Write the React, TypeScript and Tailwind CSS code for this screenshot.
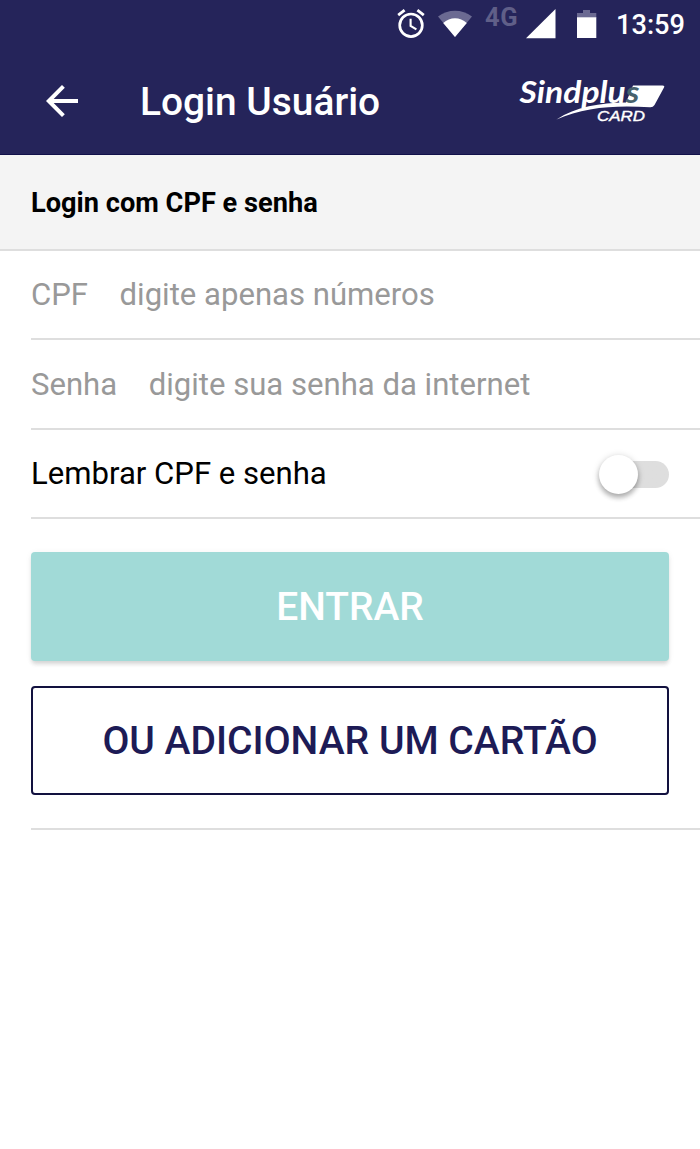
import { useState } from 'react';

function AlarmIcon() {
  return (
    <svg width="28" height="30" viewBox="0 0 28 30" fill="none" stroke="white" className="shrink-0">
      <circle cx="14" cy="16.3" r="11.3" strokeWidth="2.7" />
      <path d="M13.6 9.8v7.2l5.8 3.4" strokeWidth="2.1" />
      <path d="M1.2 6.2 7.6 1.2M26.8 6.2 20.4 1.2" strokeWidth="2.8" />
    </svg>
  );
}

function WifiIcon() {
  return (
    <svg width="34" height="28" viewBox="0 0 34 28" className="shrink-0">
      <path d="M0 6.5C10-1.2 24-1.2 34 6.5L17 27z" fill="#6b6a92" />
      <path d="M5.2 13C12 6.5 22 6.5 28.8 13L17 27z" fill="white" />
    </svg>
  );
}

function SignalIcon() {
  return (
    <svg width="30" height="30" viewBox="0 0 30 30" className="shrink-0">
      <path d="M29.5 0v29.3H0z" fill="white" />
    </svg>
  );
}

function BatteryIcon() {
  return (
    <svg width="20" height="28" viewBox="0 0 20 28" className="shrink-0">
      <path d="M6 0h7v3h6.3v5H0V3h6z" fill="#6b6a92" />
      <path d="M0 7.3h19.3V28H0z" fill="white" />
    </svg>
  );
}

function BackIcon() {
  return (
    <svg width="32" height="32" viewBox="0 0 32 32" fill="none" stroke="white" strokeWidth="4">
      <path d="M32 16H3M17.4 1.4 2.8 16l14.6 14.6" />
    </svg>
  );
}

function Logo() {
  return (
    <svg width="148" height="64" viewBox="0 -9 148 64" className="overflow-visible font-[Lato,sans-serif]">
      <path d="M115 7.5H144.5Q147 7.500 146 9.5L136.5 27Q135 29.500 132 29.300C98 27 66 29 38.500 41.500C58 28.500 82 25 108 24.500Z" fill="white" />
      <text x="1.5" y="24.5" fontSize="31" fontWeight="700" fontStyle="italic" fill="white" textLength="120" lengthAdjust="spacingAndGlyphs">
        Sindplu<tspan fill="#48626d">s</tspan>
      </text>
      <text x="79" y="42.7" fontSize="15.5" fontStyle="italic" fill="white" stroke="white" strokeWidth="0.4" textLength="48" lengthAdjust="spacingAndGlyphs" className="font-['Liberation_Sans',sans-serif]">CARD</text>
    </svg>
  );
}

interface FieldProps {
  label: string;
  placeholder: string;
  type?: string;
}

function Field({ label, placeholder, type = 'text' }: FieldProps) {
  return (
    <label className="ml-[31px] flex h-[89.33px] items-center gap-[31.5px] border-b-2 border-[#dedede] pt-[2px] text-[31.1px] text-[#999]">
      <span>{label}</span>
      <input
        type={type}
        placeholder={placeholder}
        className="min-w-0 flex-1 text-black outline-none placeholder:text-[#999]"
      />
    </label>
  );
}

export default function App() {
  const [remember, setRemember] = useState(false);

  return (
    <div className="min-h-[1149px] w-full bg-white font-[Roboto,sans-serif] text-black">
      {/* Status bar */}
      <div className="flex h-12 items-center justify-end bg-[#25245a] pr-[15px] text-white">
        <AlarmIcon />
        <div className="ml-[13px]"><WifiIcon /></div>
        <span className="mb-[13px] ml-[13px] w-[34px] text-[25.5px] leading-none font-bold tracking-[0.5px] text-[#605f88]">4G</span>
        <div className="ml-[7px]"><SignalIcon /></div>
        <div className="ml-[21px]"><BatteryIcon /></div>
        <span className="mt-[3px] ml-[19px] text-[27.2px] leading-none font-medium">13:59</span>
      </div>

      {/* App bar */}
      <header className="flex h-[107px] items-center border-b border-[#12114a] bg-[#25245a] pr-[34px] pl-[46px] text-white">
        <button aria-label="Voltar"><BackIcon /></button>
        <h1 className="ml-[62px] flex-1 pt-[2px] text-[38.9px] font-medium">Login Usuário</h1>
        <Logo />
      </header>

      <div className="flex h-[96px] items-center border-b-2 border-[#dedede] bg-[#f4f4f4] px-[31px] pt-[2px] text-[27.2px] font-bold">
        Login com CPF e senha
      </div>

      <Field label="CPF" placeholder="digite apenas números" />
      <Field label="Senha" placeholder="digite sua senha da internet" type="password" />

      <div className="ml-[31px] flex h-[89.33px] items-center justify-between border-b-2 border-[#dedede] pt-[3px] pr-[31px] text-[31.1px]">
        <span className="pb-[2px]">Lembrar CPF e senha</span>
        <button
          role="switch"
          aria-checked={remember}
          aria-label="Lembrar CPF e senha"
          onClick={() => setRemember(!remember)}
          className={`flex h-[27px] w-[70px] items-center rounded-full ${remember ? 'justify-end bg-[#a1dad7]' : 'bg-linear-to-r from-transparent from-30% to-[#dedede] to-30%'}`}
        >
          <span className="size-[39px] shrink-0 rounded-full bg-white shadow-[0_4px_5px_rgba(0,0,0,0.24),0_1px_7px_rgba(0,0,0,0.18)]" />
        </button>
      </div>

      {/* Actions */}
      <div className="ml-[31px] flex h-[311px] flex-col gap-[25px] border-b-2 border-[#dedede] pt-[33px] pr-[31px] text-[38.9px] font-medium">
        <button className="h-[109px] rounded-[4px] bg-[#a1dad7] pt-px text-white shadow-[0_4px_4px_-1px_rgba(0,0,0,0.14),0_1px_6px_rgba(0,0,0,0.06)]">
          ENTRAR
        </button>
        <button className="h-[109px] rounded-[4px] border-2 border-[#12113f] pt-px text-[39.1px] text-[#1d1b56]">
          OU ADICIONAR UM CARTÃO
        </button>
      </div>
    </div>
  );
}
